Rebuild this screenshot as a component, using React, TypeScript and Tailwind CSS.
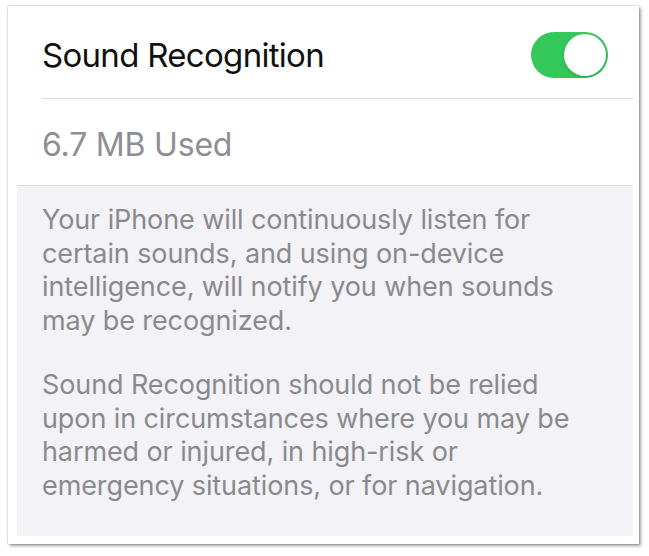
export default function App() {
  const font = { fontFamily: 'Inter, "Noto Sans", "Liberation Sans", sans-serif' };
  return (
    <div className="w-[649px] h-[556px] bg-white pt-[6px] pl-[8px]" style={font}>
      <div className="w-[631px] h-[538px] bg-white pl-[9px] pr-[6px] pb-[8px] flex flex-col shadow-[0_0_2px_rgba(0,0,0,0.35),2px_2px_3px_rgba(0,0,0,0.35)]">
        <div className="h-[92px] pt-[6px] pl-[25px] pr-[25px] flex items-center justify-between">
          <span className="text-[33px] leading-none text-[#111] tracking-[-0.7px]">Sound Recognition</span>
          <div className="w-[77px] h-[46px] rounded-full bg-[#34c759] flex items-center justify-end pr-[2px]">
            <div className="w-[42px] h-[42px] rounded-full bg-white shadow-[0_1px_3px_rgba(0,0,0,0.2)]" />
          </div>
        </div>
        <div className="ml-[25px] h-px bg-[#dcdcdf]" />
        <div className="h-[86px] pl-[25px] pt-[5px] flex items-center">
          <span className="text-[32px] leading-none text-[#8e8e93] tracking-[-0.2px]">6.7 MB Used</span>
        </div>
        <div className="h-px bg-[#dcdcdf]" />
        <div className="flex-1 bg-[#f2f2f7] pl-[25px] pt-[17px] text-[27px] leading-[33.5px] text-[#8a8a8e] tracking-[-0.1px]">
          <p>
            Your iPhone will continuously listen for<br />
            certain sounds, and using on-device<br />
            intelligence, will notify you when sounds<br />
            may be recognized.
          </p>
          <p className="mt-[31px]">
            Sound Recognition should not be relied<br />
            upon in circumstances where you may be<br />
            harmed or injured, in high-risk or<br />
            emergency situations, or for navigation.
          </p>
        </div>
      </div>
    </div>
  );
}
